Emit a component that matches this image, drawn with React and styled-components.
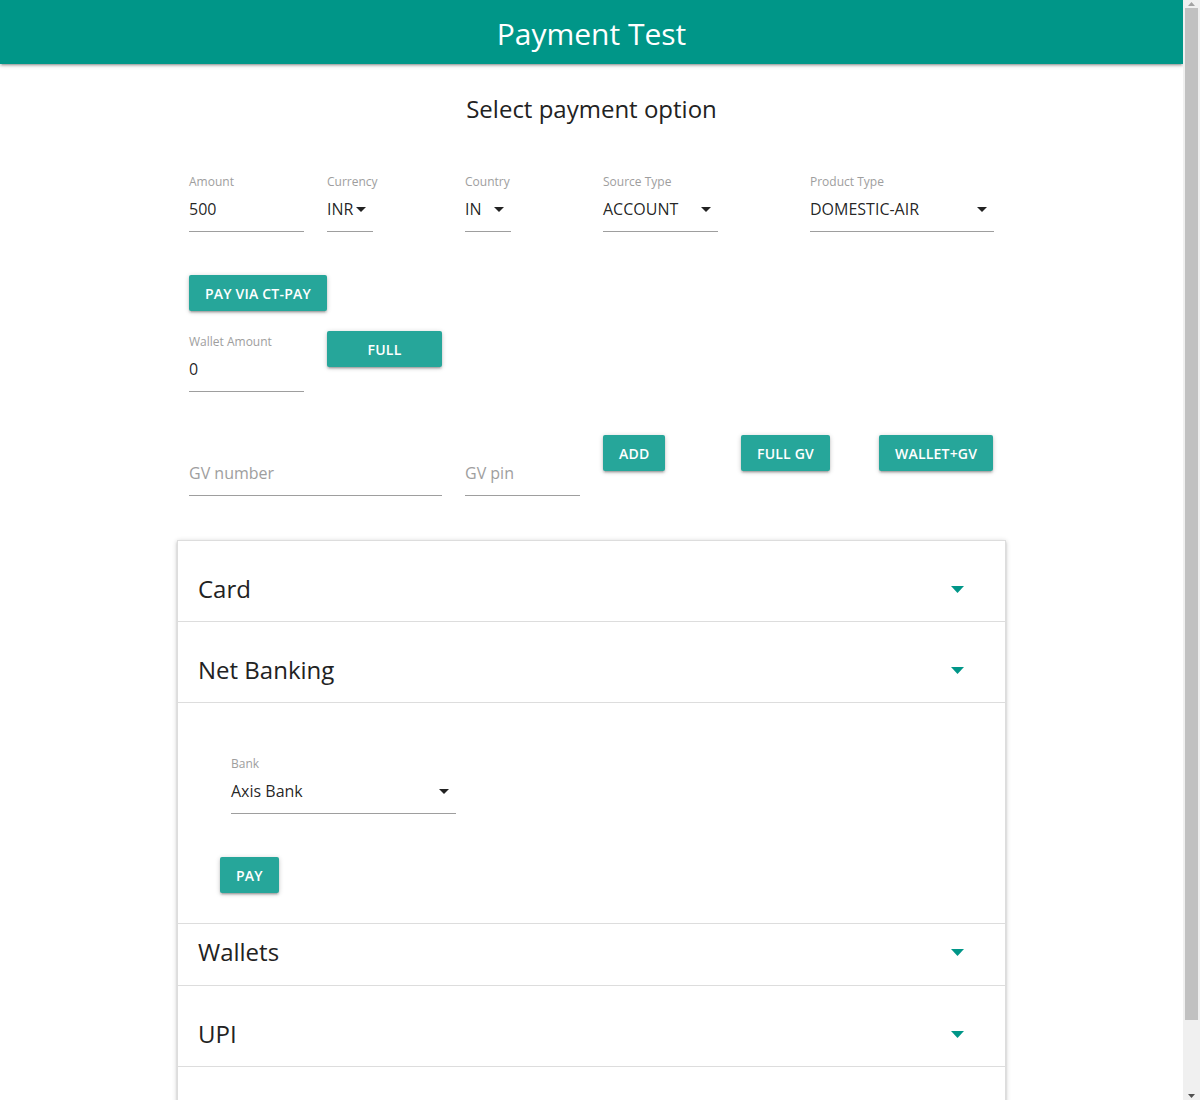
import React from 'react';
import styled, { createGlobalStyle } from 'styled-components';

const GlobalStyle = createGlobalStyle`
  body {
    margin: 0;
    padding-right: 17px;
    font-family: 'Open Sans', 'Noto Sans', sans-serif;
    color: rgba(0, 0, 0, 0.87);
    background: #ffffff;
  }
`;

// stand-in for the browser's classic scrollbar shown in the screenshot
const ScrollTrack = styled.div`
  position: fixed;
  top: 0;
  right: 0;
  width: 17px;
  height: 100vh;
  background: #f0f0f0;
  display: flex;
  flex-direction: column;
  align-items: center;
  z-index: 10;
`;

const ScrollArrow = styled.div`
  height: 8px;
  display: flex;
  align-items: center;
  justify-content: center;
  flex: none;
`;

const ScrollThumb = styled.div`
  width: 13px;
  height: 1012px;
  background: #c1c1c1;
  flex: none;
`;

const ScrollSpace = styled.div`
  flex: 1;
`;

const Header = styled.header`
  height: 64px;
  background-color: #009688;
  box-shadow: 0 2px 2px 0 rgba(0, 0, 0, 0.14), 0 3px 1px -2px rgba(0, 0, 0, 0.12),
    0 1px 5px 0 rgba(0, 0, 0, 0.2);
  display: flex;
  align-items: center;
  justify-content: center;
  padding-top: 3px;
  box-sizing: border-box;
`;

const Title = styled.h1`
  margin: 0;
  font-size: 30px;
  font-weight: 400;
  color: #ffffff;
  line-height: 40px;
`;

const Container = styled.div`
  width: 829px;
  margin: 0 auto;
  padding-bottom: 40px;
`;

const Subtitle = styled.h2`
  margin: 29px 0 0;
  font-size: 24px;
  line-height: 32px;
  font-weight: 400;
  text-align: center;
  color: #222;
`;

const Row = styled.div`
  display: flex;
  align-items: flex-start;
  padding-left: 12px;
  margin-top: ${({ top }) => top}px;
`;

const Cell = styled.div`
  width: ${({ w }) => w}px;
  flex: none;
  padding-top: ${({ pt }) => pt || 0}px;
`;

const Field = styled.div`
  width: ${({ w }) => w}px;
`;

const Label = styled.div`
  font-size: 12px;
  line-height: 14px;
  color: #9e9e9e;
  height: 14px;
  padding-top: 1px;
`;

const Value = styled.div`
  display: flex;
  align-items: center;
  justify-content: space-between;
  padding: 9px 7px 11px 0;
  font-size: 16px;
  line-height: 22px;
  height: 22px;
  color: ${({ placeholder }) => (placeholder ? '#9e9e9e' : 'rgba(0,0,0,0.87)')};
  border-bottom: 1px solid #9e9e9e;
`;

const Button = styled.button`
  height: 36px;
  width: ${({ w }) => (w ? `${w}px` : 'auto')};
  padding: 0 16px;
  border: none;
  border-radius: 2px;
  background-color: #26a69a;
  color: #ffffff;
  font-family: inherit;
  font-size: 14px;
  font-weight: 600;
  letter-spacing: 0.2px;
  text-transform: uppercase;
  box-shadow: 0 2px 2px 0 rgba(0, 0, 0, 0.14), 0 3px 1px -2px rgba(0, 0, 0, 0.12),
    0 1px 5px 0 rgba(0, 0, 0, 0.2);
  cursor: pointer;
`;

const Collapsible = styled.ul`
  list-style: none;
  margin: 44px 0 0;
  padding: 0;
  border: 1px solid #ddd;
  border-bottom: none;
  box-shadow: 0 2px 2px 0 rgba(0, 0, 0, 0.14), 0 3px 1px -2px rgba(0, 0, 0, 0.12),
    0 1px 5px 0 rgba(0, 0, 0, 0.2);
`;

const ItemHeader = styled.div`
  display: flex;
  align-items: center;
  justify-content: space-between;
  height: 32px;
  line-height: 32px;
  padding: ${({ tall }) => (tall ? '32px 41px 16px 20px' : '12px 41px 17px 20px')};
  border-bottom: 1px solid #ddd;
  font-size: 24px;
  color: #222;
`;

const ItemBody = styled.div`
  padding: 53px 0 30px 42px;
  border-bottom: 1px solid #ddd;
`;

const BankField = styled.div`
  margin-left: 11px;
  width: 225px;
  margin-bottom: 43px;
`;

const Filler = styled.div`
  height: 90px;
  border-bottom: 1px solid #ddd;
`;

const Caret = () => (
  <svg width="10" height="5" viewBox="0 0 10 5">
    <path d="M0 0 L10 0 L5 5 Z" fill="#222" />
  </svg>
);

const TealCaret = () => (
  <svg width="13" height="7" viewBox="0 0 13 7">
    <path d="M0 0 L13 0 L6.5 7 Z" fill="#009688" />
  </svg>
);

const Select = ({ label, value, w }) => (
  <Field w={w}>
    <Label>{label}</Label>
    <Value>
      <span>{value}</span>
      <Caret />
    </Value>
  </Field>
);

const Input = ({ label, value, placeholder, w }) => (
  <Field w={w}>
    <Label>{label}</Label>
    <Value placeholder={placeholder ? 1 : 0}>{value || placeholder}</Value>
  </Field>
);

const sections = [
  { title: 'Card', tall: true },
  { title: 'Net Banking', tall: true, open: true },
  { title: 'Wallets' },
  { title: 'UPI', tall: true },
];

const App = () => (
  <>
    <GlobalStyle />
    <ScrollTrack>
      <ScrollArrow>
        <svg width="7" height="4" viewBox="0 0 7 4">
          <path d="M0 4 L7 4 L3.5 0 Z" fill="#a3a3a3" />
        </svg>
      </ScrollArrow>
      <ScrollThumb />
      <ScrollSpace />
      <ScrollArrow>
        <svg width="7" height="4" viewBox="0 0 7 4">
          <path d="M0 0 L7 0 L3.5 4 Z" fill="#505050" />
        </svg>
      </ScrollArrow>
    </ScrollTrack>
    <Header>
      <Title>Payment Test</Title>
    </Header>
    <Container>
      <Subtitle>Select payment option</Subtitle>

      <Row top={49}>
        <Cell w={138}>
          <Input label="Amount" value="500" w={115} />
        </Cell>
        <Cell w={138}>
          <Select label="Currency" value="INR" w={46} />
        </Cell>
        <Cell w={138}>
          <Select label="Country" value="IN" w={46} />
        </Cell>
        <Cell w={207}>
          <Select label="Source Type" value="ACCOUNT" w={115} />
        </Cell>
        <Cell w={184}>
          <Select label="Product Type" value="DOMESTIC-AIR" w={184} />
        </Cell>
      </Row>

      <Row top={43}>
        <Button>Pay via CT-PAY</Button>
      </Row>

      <Row top={20}>
        <Cell w={138} pt={3}>
          <Input label="Wallet Amount" value="0" w={115} />
        </Cell>
        <Cell w={138}>
          <Button w={115}>Full</Button>
        </Cell>
      </Row>

      <Row top={43}>
        <Cell w={276} pt={3}>
          <Input label="" placeholder="GV number" w={253} />
        </Cell>
        <Cell w={138} pt={3}>
          <Input label="" placeholder="GV pin" w={115} />
        </Cell>
        <Cell w={138}>
          <Button>Add</Button>
        </Cell>
        <Cell w={138}>
          <Button>Full GV</Button>
        </Cell>
        <Cell w={138}>
          <Button>Wallet+GV</Button>
        </Cell>
      </Row>

      <Collapsible>
        {sections.map((s) => (
          <li key={s.title}>
            <ItemHeader tall={s.tall ? 1 : 0}>
              <span>{s.title}</span>
              <TealCaret />
            </ItemHeader>
            {s.open && (
              <ItemBody>
                <BankField>
                  <Label>Bank</Label>
                  <Value>
                    <span>Axis Bank</span>
                    <Caret />
                  </Value>
                </BankField>
                <Button>Pay</Button>
              </ItemBody>
            )}
          </li>
        ))}
        <Filler />
      </Collapsible>
    </Container>
  </>
);

export default App;
